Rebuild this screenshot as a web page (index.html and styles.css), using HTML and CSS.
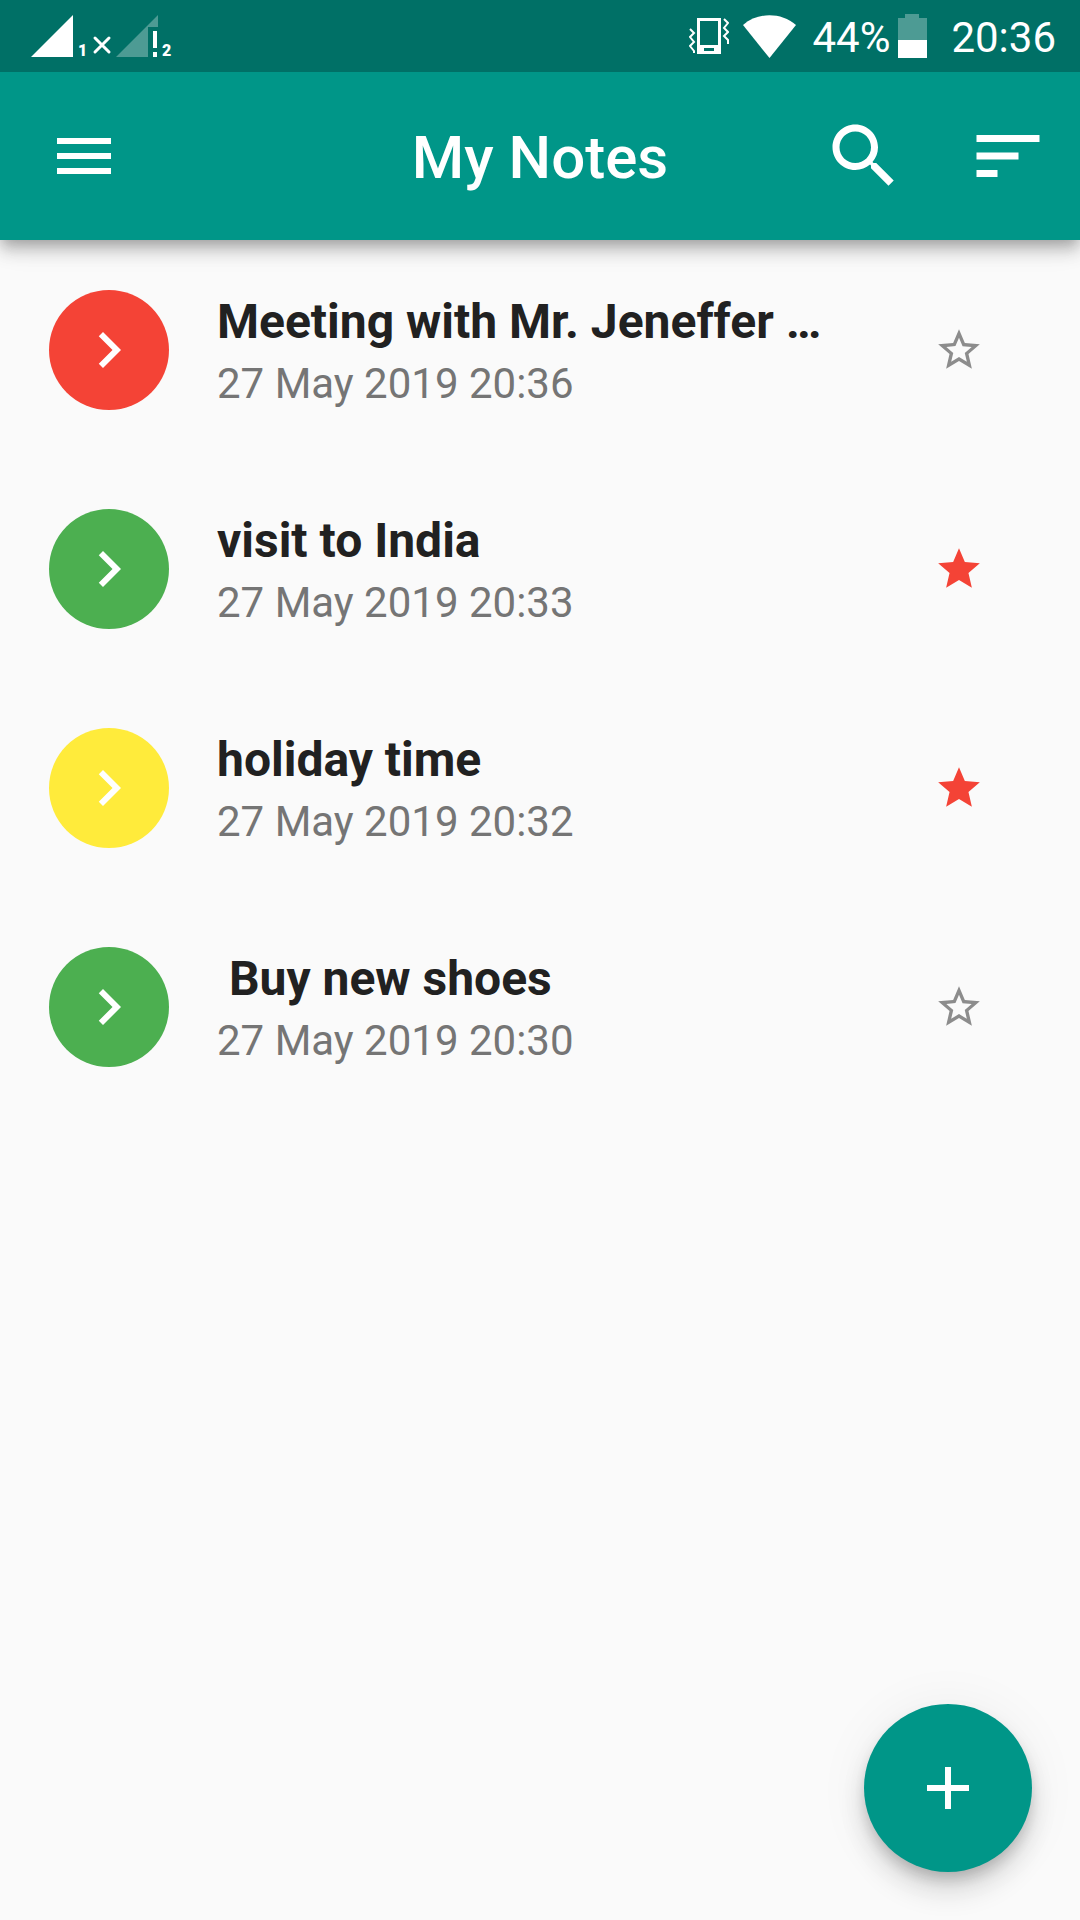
FILE: index.html
```html
<!DOCTYPE html>
<html lang="en">
<head>
<meta charset="utf-8">
<meta name="viewport" content="width=device-width, initial-scale=1">
<title>My Notes</title>
<link rel="stylesheet" href="styles.css">
</head>
<body>
<svg class="sprite" aria-hidden="true">
  <symbol id="chevron" viewBox="0 0 24 24"><path d="M8.59 16.59L13.17 12 8.59 7.41 10 6l6 6-6 6z"/></symbol>
  <symbol id="star" viewBox="0 0 24 24"><path d="M12 17.27L18.18 21l-1.64-7.03L22 9.24l-7.19-.61L12 2 9.19 8.63 2 9.24l5.46 4.73L5.82 21z"/></symbol>
  <symbol id="star-outline" viewBox="0 0 24 24"><path d="M22 9.24l-7.19-.62L12 2 9.19 8.63 2 9.24l5.46 4.73L5.82 21 12 17.27 18.18 21l-1.63-7.03L22 9.24zM12 15.4l-3.76 2.27 1-4.28-3.32-2.88 4.38-.38L12 6.1l1.71 4.04 4.38.38-3.32 2.88 1 4.28L12 15.4z"/></symbol>
</svg>

<div class="status-bar">
  <svg class="signals" width="150" height="54" viewBox="0 -5 150 54" aria-hidden="true">
    <path d="M0 43L42 1V43z"/>
    <text x="47" y="42">1</text>
    <path class="cross" d="M64 24L78 38M78 24L64 38"/>
    <path class="dim" d="M85 43L127 1V13H117V43z"/>
    <path d="M122 17h4v17h-4zM122 38h4v5h-4z"/>
    <text x="131" y="42">2</text>
  </svg>
  <div class="status-right">
    <svg class="vibrate" width="40" height="36" viewBox="0 0 40 36" aria-hidden="true">
      <path fill-rule="evenodd" d="M8 0h24v36H8zM11 3v24h18V3zM15 30v3h10v-3z"/>
      <path class="wave" d="M1 11l4 4-4 4 4 5-4 4 4 5v2M35 1l4 4-4 5 4 4-4 4 4 4v4"/>
    </svg>
    <svg class="wifi" width="53" height="43" viewBox="0 0 53 43" aria-hidden="true"><path d="M0 10C15-3 38-3 53 10L26.500 43z"/></svg>
    <span class="status-text">44%</span>
    <svg class="battery" width="29" height="44" viewBox="0 0 29 44" aria-hidden="true">
      <path class="dim" d="M7 0h14v4h8v22H0V4h7z"/><path d="M0 26h29v18H0z"/>
    </svg>
    <time class="status-text">20:36</time>
  </div>
</div>

<header class="app-bar">
  <div class="bar-side">
    <button class="bar-button menu" type="button" aria-label="Open menu"><svg viewBox="0 0 24 24" aria-hidden="true"><path d="M3 18h18v-2H3v2zm0-5h18v-2H3v2zm0-7v2h18V6H3z"/></svg></button>
  </div>
  <h1>My Notes</h1>
  <div class="bar-side bar-actions">
    <button class="bar-button" type="button" aria-label="Search"><svg viewBox="0 0 24 24" aria-hidden="true"><path d="M15.500 14h-.79l-.28-.27C15.410 12.590 16 11.110 16 9.500 16 5.910 13.090 3 9.500 3S3 5.910 3 9.500 5.910 16 9.500 16c1.610 0 3.090-.59 4.230-1.570l.27.28v.79l5 4.990L20.490 19l-4.990-5zm-6 0C7.010 14 5 11.990 5 9.500S7.010 5 9.500 5 14 7.010 14 9.500 11.990 14 9.500 14z"/></svg></button>
    <button class="bar-button" type="button" aria-label="Sort"><svg viewBox="0 0 24 24" aria-hidden="true"><path d="M3 18h6v-2H3v2zM3 6v2h18V6H3zm0 7h12v-2H3v2z"/></svg></button>
  </div>
</header>

<main>
  <ul class="notes">
    <li class="note">
      <button class="open red" type="button" aria-label="Open note"><svg aria-hidden="true"><use href="#chevron"/></svg></button>
      <div class="note-text"><h2>Meeting with Mr. Jeneffer …</h2><p>27 May 2019 20:36</p></div>
      <button class="favorite" type="button" aria-label="Add to favorites"><svg aria-hidden="true"><use href="#star-outline"/></svg></button>
    </li>
    <li class="note">
      <button class="open green" type="button" aria-label="Open note"><svg aria-hidden="true"><use href="#chevron"/></svg></button>
      <div class="note-text"><h2>visit to India</h2><p>27 May 2019 20:33</p></div>
      <button class="favorite active" type="button" aria-label="Remove from favorites"><svg aria-hidden="true"><use href="#star"/></svg></button>
    </li>
    <li class="note">
      <button class="open yellow" type="button" aria-label="Open note"><svg aria-hidden="true"><use href="#chevron"/></svg></button>
      <div class="note-text"><h2>holiday time</h2><p>27 May 2019 20:32</p></div>
      <button class="favorite active" type="button" aria-label="Remove from favorites"><svg aria-hidden="true"><use href="#star"/></svg></button>
    </li>
    <li class="note">
      <button class="open green" type="button" aria-label="Open note"><svg aria-hidden="true"><use href="#chevron"/></svg></button>
      <div class="note-text"><h2> Buy new shoes</h2><p>27 May 2019 20:30</p></div>
      <button class="favorite" type="button" aria-label="Add to favorites"><svg aria-hidden="true"><use href="#star-outline"/></svg></button>
    </li>
  </ul>
</main>

<button class="fab" type="button" aria-label="Add note"><svg viewBox="0 0 24 24" aria-hidden="true"><path d="M19 13h-6v6h-2v-6H5v-2h6V5h2v6h6v2z"/></svg></button>
</body>
</html>
```
FILE: styles.css
```css
* {
  box-sizing: border-box;
}

body {
  margin: 0;
  min-height: 100vh;
  background: #fafafa;
  color: #212121;
  font-family: Roboto, "Noto Sans", sans-serif;
}

h1, h2, p, ul {
  margin: 0;
  padding: 0;
}

button {
  display: flex;
  align-items: center;
  justify-content: center;
  flex: none;
  padding: 0;
  border: 0;
  background: none;
  color: inherit;
  cursor: pointer;
}

svg {
  display: block;
  flex: none;
  fill: currentColor;
}

.sprite {
  display: none;
}

/* System status bar */
.status-bar {
  position: relative;
  z-index: 1;
  display: flex;
  align-items: center;
  justify-content: space-between;
  height: 72px;
  padding: 0 24px 0 31px;
  background: #007066;
  color: #fff;
}

.signals {
  overflow: visible;
}

.signals text {
  font-size: 16px;
  font-weight: 900;
}

.cross,
.wave {
  fill: none;
  stroke: currentColor;
  stroke-width: 2;
}

.cross {
  stroke-width: 3;
  stroke-linecap: round;
}

.dim {
  opacity: 0.3;
}

.status-right {
  display: flex;
  align-items: center;
}

.status-text {
  padding-top: 4px;
  font-size: 42px;
  line-height: 48px;
}

.wifi {
  margin: 0 16px 0 14px;
}

.battery {
  margin: 0 24px 0 8px;
}

/* App bar */
.app-bar {
  position: relative;
  display: grid;
  grid-template-columns: 1fr auto 1fr;
  align-items: center;
  height: 168px;
  background: #009688;
  color: #fff;
  box-shadow:
    0 6px 12px -3px rgba(0, 0, 0, 0.2),
    0 12px 15px rgba(0, 0, 0, 0.14),
    0 3px 30px rgba(0, 0, 0, 0.12);
}

.app-bar h1 {
  padding-top: 4px;
  font-size: 60px;
  font-weight: 500;
  line-height: 72px;
}

.bar-side {
  display: flex;
  padding-left: 12px;
}

.bar-actions {
  justify-content: flex-end;
  padding-left: 0;
}

.bar-button {
  width: 144px;
  height: 144px;
}

.bar-button svg {
  width: 84px;
  height: 84px;
}

.menu svg {
  width: 72px;
  height: 72px;
}

/* Notes list */
.notes {
  list-style: none;
}

.note {
  display: flex;
  align-items: center;
  gap: 48px;
  height: 219px;
  padding: 0 49px;
}

.open {
  width: 120px;
  height: 120px;
  border-radius: 50%;
  color: #fff;
}

.open svg {
  width: 72px;
  height: 72px;
}

.red {
  background: #f44336;
}

.green {
  background: #4caf50;
}

.yellow {
  background: #ffeb3b;
}

.note-text {
  flex: 1;
  min-width: 0;
  padding-top: 4px;
}

.note-text h2 {
  overflow: hidden;
  font-size: 48px;
  font-weight: 700;
  line-height: 64px;
  text-overflow: ellipsis;
  white-space: pre;
}

.note-text p {
  color: #757575;
  font-size: 42px;
  line-height: 60px;
}

.favorite {
  width: 144px;
  height: 144px;
  color: #8c8c8c;
}

.favorite.active {
  color: #f44336;
}

.favorite svg {
  width: 50px;
  height: 50px;
}

/* Floating action button */
.fab {
  position: fixed;
  right: 48px;
  bottom: 48px;
  width: 168px;
  height: 168px;
  border-radius: 50%;
  background: #009688;
  color: #fff;
  box-shadow:
    0 9px 15px -3px rgba(0, 0, 0, 0.2),
    0 18px 30px rgba(0, 0, 0, 0.14),
    0 3px 54px rgba(0, 0, 0, 0.06);
}

.fab svg {
  width: 72px;
  height: 72px;
}
```
